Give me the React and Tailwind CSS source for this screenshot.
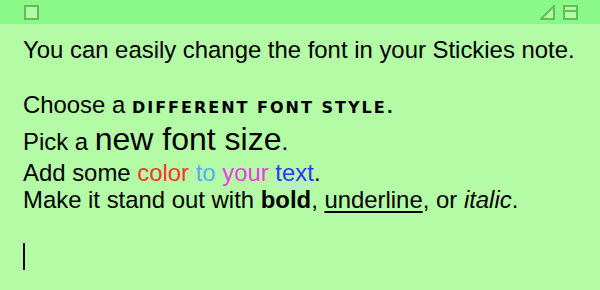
export default function App() {
  return (
    <div
      className="w-[600px] h-[290px] bg-[#b3fba5] flex flex-col overflow-hidden"
      style={{ fontFamily: "'Liberation Sans', Arial, sans-serif" }}
    >
      {/* Title bar */}
      <header className="h-[24px] shrink-0 bg-[#8af987] flex items-center justify-between px-[24px]">
        <div className="w-[15px] h-[15px] border-2 border-[#5fbd5c] bg-[#b3fba5]" />
        <div className="flex items-center gap-[8px] -mr-[2px]">
          <svg width="15" height="15" viewBox="0 0 15 15">
            <path d="M14 1 L14 14 L1 14 Z" fill="#b3fba5" stroke="#5fbd5c" strokeWidth="2" strokeLinejoin="miter" />
          </svg>
          <svg width="15" height="15" viewBox="0 0 15 15">
            <rect x="1" y="1" width="13" height="13" fill="#b3fba5" stroke="#5fbd5c" strokeWidth="2" />
            <line x1="1" y1="6" x2="14" y2="6" stroke="#5fbd5c" strokeWidth="2" />
          </svg>
        </div>
      </header>

      {/* Note body */}
      <main className="px-[23px] pt-[12px] text-black text-[23.9px] leading-[27.5px] whitespace-nowrap">
        <p>You can easily change the font in your Stickies note.</p>
        <p className="mt-[27.5px]">
          Choose a{" "}
          <span
            className="uppercase text-[16px] font-bold tracking-[2px]"
            style={{ fontFamily: "'DejaVu Sans', sans-serif" }}
          >
            different font style.
          </span>
        </p>
        <p className="leading-[35px]">
          Pick a <span className="text-[32px]">new font size</span>.
        </p>
        <p>
          Add some <span className="text-[#ff3030]">color</span>{" "}
          <span className="text-[#5aaaff]">to</span>{" "}
          <span className="text-[#ea3ceb]">your</span>{" "}
          <span className="text-[#3333ff] underline decoration-[#c9e0f0] underline-offset-[4px]">text</span>.
        </p>
        <p>
          Make it stand out with <b>bold</b>, <span className="underline underline-offset-[3px]">underline</span>, or{" "}
          <i>italic</i>.
        </p>
        <div className="mt-[29px] w-[2px] h-[27px] bg-black" />
      </main>
    </div>
  );
}
